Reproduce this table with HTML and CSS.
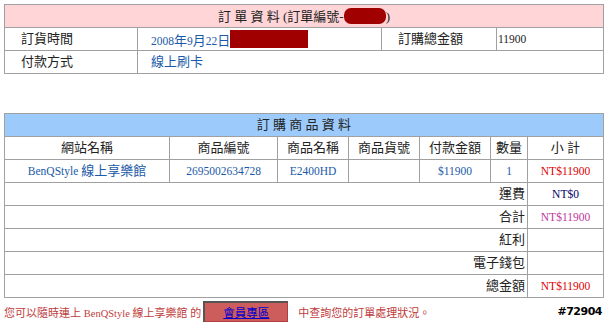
FILE: index.html
```html
<!DOCTYPE html>
<html lang="zh-Hant">
<head>
<meta charset="utf-8">
<title>訂單資料</title>
<link rel="stylesheet" href="styles.css">
</head>
<body>
<div class="page">
  <table class="grid order">
    <colgroup>
      <col class="o1"><col class="o2"><col class="o3"><col class="o4">
    </colgroup>
    <tr class="pink">
      <td colspan="4" class="center">訂 單 資 料 (訂單編號-<span class="redact r1"></span>)</td>
    </tr>
    <tr>
      <td class="label">訂貨時間</td>
      <td class="val blue"><span class="lat">2008</span>年<span class="lat">9</span>月<span class="lat">22</span>日<span class="redact r2"></span></td>
      <td class="label">訂購總金額</td>
      <td class="num lat">11900</td>
    </tr>
    <tr>
      <td class="label">付款方式</td>
      <td class="val blue" colspan="3">線上刷卡</td>
    </tr>
  </table>

  <table class="grid items">
    <colgroup>
      <col class="i1"><col class="i2"><col class="i3"><col class="i4"><col class="i5"><col class="i6"><col class="i7">
    </colgroup>
    <tr class="sky">
      <td colspan="7" class="center">訂 購 商 品 資 料</td>
    </tr>
    <tr class="center">
      <td>網站名稱</td>
      <td>商品編號</td>
      <td>商品名稱</td>
      <td>商品貨號</td>
      <td>付款金額</td>
      <td>數量</td>
      <td>小 計</td>
    </tr>
    <tr class="center blue">
      <td><span class="lat">BenQStyle </span>線上享樂館</td>
      <td class="lat">2695002634728</td>
      <td class="lat">E2400HD</td>
      <td></td>
      <td class="lat">$11900</td>
      <td class="lat">1</td>
      <td class="lat red">NT$11900</td>
    </tr>
    <tr>
      <td colspan="6" class="right">運費</td>
      <td class="center lat navy">NT$0</td>
    </tr>
    <tr>
      <td colspan="6" class="right">合計</td>
      <td class="center lat magenta">NT$11900</td>
    </tr>
    <tr>
      <td colspan="6" class="right">紅利</td>
      <td></td>
    </tr>
    <tr>
      <td colspan="6" class="right">電子錢包</td>
      <td></td>
    </tr>
    <tr>
      <td colspan="6" class="right">總金額</td>
      <td class="center lat red">NT$11900</td>
    </tr>
  </table>

  <div class="footer">
    <span class="note">您可以隨時連上 <span class="flat">BenQStyle</span> 線上享樂館 的</span>
    <span class="member"><a href="#">會員專區</a></span>
    <span class="note">中查詢您的訂單處理狀況。</span>
    <span class="stamp">#72904</span>
  </div>
</div>
</body>
</html>
```
FILE: styles.css
```css
html, body {
  margin: 0;
  padding: 0;
  background: #ffffff;
}
.page {
  padding: 4px 6px 0 4px;
  font-family: "Liberation Serif", "Noto Sans CJK TC", serif;
  font-size: 13px;
  color: #222222;
}
.grid {
  width: 599px;
  border-collapse: collapse;
  table-layout: fixed;
}
.grid td {
  border: 1px solid #a0a0a0;
  height: 22px;
  padding: 0;
  line-height: 16px;
  white-space: nowrap;
  overflow: hidden;
}
.items {
  margin-top: 39px;
}
.o1 { width: 133px; }
.o2 { width: 244px; }
.o3 { width: 115px; }
.o4 { width: 107px; }
.i1 { width: 165px; }
.i2 { width: 108px; }
.i3 { width: 71px; }
.i4 { width: 71px; }
.i5 { width: 71px; }
.i6 { width: 37px; }
.i7 { width: 76px; }
.pink td { background: #ffd5d7; }
.sky td { background: #9ccbfb; }
.center, .center td { text-align: center; }
.right { text-align: right; padding-right: 2px !important; }
.label { padding-left: 16px !important; }
.val { padding-left: 13px !important; }
.num { padding-left: 1px !important; }
.lat { font-size: 11.5px; }
.blue, .blue td { color: #1a5aa8; }
.red, .blue td.red { color: #e00000; }
.navy { color: #000066; }
.magenta { color: #c0379a; }
.redact {
  display: inline-block;
  vertical-align: -3px;
  background: #a00000;
}
.r1 {
  width: 42px;
  height: 16px;
  border-radius: 7px;
}
.r2 {
  width: 78px;
  height: 18px;
}
.footer {
  display: flex;
  align-items: center;
  margin-top: 3px;
  height: 21px;
  font-size: 11px;
}
.flat { font-size: 10.5px; }
.note {
  color: #c03c3c;
}
.member {
  display: flex;
  align-items: center;
  justify-content: center;
  width: 82px;
  height: 18px;
  margin: 0 10px 0 2px;
  background: #cd5c5c;
  border-top: 2px solid #555555;
  border-left: 2px solid #555555;
  border-right: 1px solid #b04040;
  border-bottom: 1px solid #b04040;
  font-size: 11.5px;
}
.member a {
  color: #0000cc;
  text-decoration: underline;
}
.stamp {
  margin-left: auto;
  font-family: "DejaVu Sans", sans-serif;
  font-weight: bold;
  font-size: 11px;
  color: #000000;
  letter-spacing: -0.5px;
}
```
